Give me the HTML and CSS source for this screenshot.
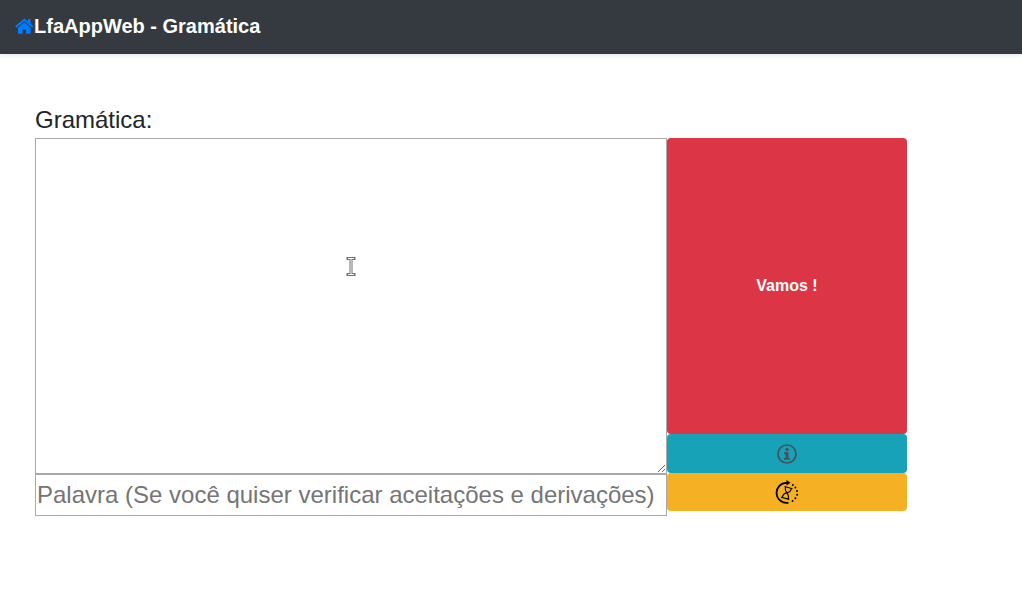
FILE: index.html
```html
<!DOCTYPE html>
<html lang="pt-BR">
<head>
<meta charset="utf-8">
<meta name="viewport" content="width=device-width, initial-scale=1">
<title>LfaAppWeb - Gramática</title>
<link rel="stylesheet" href="styles.css">
</head>
<body>
<header class="navbar">
  <a class="home" href="#" aria-label="Início">
    <svg class="home-icon" viewBox="0 0 19 16" aria-hidden="true">
      <path d="M13 1h2.600v5.500L13 4.300z"/>
      <path d="M9.300 4.300 15.700 9.700V15a.7.7 0 0 1-.7.7H11V11.500H7.700v4.200H3.600a.7.7 0 0 1-.7-.7V9.700z"/>
      <path class="roof" d="M.8 8.900 9.300 1.700l8.500 7.200"/>
    </svg>
  </a>
  <h1 class="brand">LfaAppWeb - Gramática</h1>
</header>
<main class="content">
  <form class="grammar">
    <label class="title" for="grammar">Gramática:</label>
    <div class="workspace">
      <div class="fields">
        <textarea class="field editor" id="grammar"></textarea>
        <input class="field word" type="text" aria-label="Palavra" placeholder="Palavra (Se você quiser verificar aceitações e derivações)">
        <svg class="pointer" viewBox="0 0 10 22" aria-hidden="true">
          <path class="pointer-edge" d="M2 2.500H8M5 2.500V18.500M2 18.500H8"/>
          <path class="pointer-core" d="M2 2.500H8M5 2.500V18.500M2 18.500H8"/>
        </svg>
      </div>
      <div class="actions">
        <button class="btn go" type="button">Vamos !</button>
        <button class="btn info" type="button" aria-label="Informações">
          <svg class="info-icon" viewBox="0 0 20 20" aria-hidden="true">
            <circle class="ring" cx="10" cy="10" r="9"/>
            <circle cx="10" cy="5.500" r="1.700"/>
            <path d="M7 8.200h4.500v5.800H13v1.800H7V14h1.500V10H7z"/>
          </svg>
        </button>
        <button class="btn history" type="button" aria-label="Histórico">
          <svg class="history-icon" viewBox="0 0 24 24" aria-hidden="true">
            <path class="arc" d="M13.500 22.600A10 10 0 1 1 12 2.800"/>
            <path d="M11.500 0 15.500 2.800 11.500 5.600z"/>
            <circle cx="17.800" cy="4.900" r="1"/>
            <circle cx="20.400" cy="7.500" r="1"/>
            <circle cx="22" cy="11" r="1"/>
            <circle cx="22.100" cy="14.800" r="1"/>
            <circle cx="20.400" cy="18.200" r="1"/>
            <circle cx="17.600" cy="20.900" r="1"/>
            <path class="glass" d="M9.500 6.500 17.500 8.700M6 17.200 14.300 19.400M10.500 6.800C9.900 9.700 10.300 11.300 12.500 12.800 16 11.500 16.100 10.200 16.600 8.500M7.200 17.400C7.900 14.700 8.700 13.600 11.200 12.800 13.700 14.500 13.900 16.300 13.200 19"/>
          </svg>
        </button>
      </div>
    </div>
  </form>
</main>
</body>
</html>
```
FILE: styles.css
```css
* {
  box-sizing: border-box;
}

body {
  margin: 0;
  background: #fff;
  color: #212529;
  font-family: "Liberation Sans", Arial, sans-serif;
  font-size: 16px;
  line-height: 24px;
}

.navbar {
  display: flex;
  align-items: center;
  padding: 12px 15px 14px;
  background: #343a40;
  box-shadow: 0 2px 4px rgba(0, 0, 0, 0.08);
}

.home {
  display: flex;
  color: #007bff;
}

.home-icon {
  width: 19px;
  height: 16px;
  fill: currentColor;
}

.roof {
  fill: none;
  stroke: currentColor;
  stroke-width: 2;
}

.brand {
  margin: 0;
  color: #fff;
  font-size: 20px;
  font-weight: 700;
  line-height: 28px;
}

.content {
  padding: 48px 35px;
}

.grammar {
  max-width: 872px;
}

.title {
  display: block;
  font-size: 24px;
  line-height: 36px;
}

.workspace {
  display: grid;
  grid-template-columns: minmax(0, 1fr) 240px;
  align-items: start;
}

.fields {
  position: relative;
  display: flex;
  flex-direction: column;
}

.field {
  display: block;
  width: 100%;
  margin: 0;
  padding: 1px;
  border: 1px solid #a9a9a9;
  border-radius: 0;
  background: #fff;
  color: #212529;
  font-family: inherit;
  font-size: 24px;
  line-height: 36px;
}

.editor {
  height: 336px;
  resize: both;
}

.word {
  height: 42px;
}

.word::placeholder {
  color: #757575;
  opacity: 1;
}

.pointer {
  position: absolute;
  top: 118px;
  left: 50%;
  width: 10px;
  height: 22px;
  transform: translateX(-5px);
  fill: none;
  pointer-events: none;
}

.pointer-edge {
  stroke: #707070;
  stroke-width: 3;
  stroke-linecap: square;
}

.pointer-core {
  stroke: #fff;
  stroke-width: 1;
}

.actions {
  display: flex;
  flex-direction: column;
}

.btn {
  display: flex;
  align-items: center;
  justify-content: center;
  margin: 0;
  padding: 0;
  border: 0;
  border-radius: 4px;
  color: #fff;
  font-family: inherit;
  font-size: 16px;
  font-weight: 700;
  cursor: pointer;
}

.go {
  height: 296px;
  background: #dc3545;
}

.info {
  height: 39px;
  background: #17a2b8;
}

.history {
  height: 38px;
  background: #f6b024;
}

.info-icon {
  width: 20px;
  height: 20px;
  fill: #45525a;
}

.ring {
  fill: none;
  stroke: #45525a;
  stroke-width: 1.7;
}

.history-icon {
  width: 24px;
  height: 24px;
  fill: #000;
}

.arc,
.glass {
  fill: none;
  stroke: #000;
}

.arc {
  stroke-width: 1.8;
}

.glass {
  stroke-width: 1.1;
}
```
